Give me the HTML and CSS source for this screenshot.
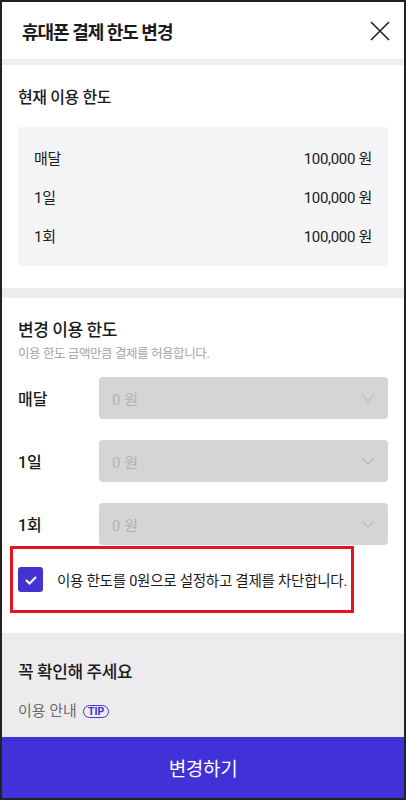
FILE: index.html
```html
<!DOCTYPE html>
<html lang="ko">
<head>
    <meta charset="UTF-8">
    <meta name="viewport" content="width=device-width, initial-scale=1.0">
    <title>휴대폰 결제 한도 변경</title>
    <link rel="stylesheet" href="styles.css">
</head>
<body>
    <div class="app">
        <div class="content">
            <!-- 상단 헤더 -->
            <header class="top-bar">
                <h1>휴대폰 결제 한도 변경</h1>
                <button class="close-btn" aria-label="닫기">
                    <svg width="20" height="20" viewBox="0 0 20 20">
                        <path d="M1 1 L19 19 M19 1 L1 19" stroke="#222" stroke-width="1.6" fill="none"/>
                    </svg>
                </button>
            </header>
            <div class="divider-thin"></div>

            <!-- 현재 이용 한도 -->
            <section class="section">
                <h2 class="section-title">현재 이용 한도</h2>
                <div class="limit-box">
                    <div class="limit-line"><span>매달</span><span>100,000 원</span></div>
                    <div class="limit-line"><span>1일</span><span>100,000 원</span></div>
                    <div class="limit-line"><span>1회</span><span>100,000 원</span></div>
                </div>
            </section>
            <div class="divider-thick"></div>

            <!-- 변경 이용 한도 -->
            <section class="section change">
                <h2 class="section-title">변경 이용 한도</h2>
                <p class="section-sub">이용 한도 금액만큼 결제를 허용합니다.</p>
                <div class="limit-form">
                    <div class="form-row">
                        <span class="form-label">매달</span>
                        <div class="select-box">
                            <span>0 원</span>
                            <svg width="14" height="8" viewBox="0 0 14 8"><path d="M1 1 L7 7 L13 1" stroke="#bdbdbd" stroke-width="1.3" fill="none"/></svg>
                        </div>
                    </div>
                    <div class="form-row">
                        <span class="form-label">1일</span>
                        <div class="select-box">
                            <span>0 원</span>
                            <svg width="14" height="8" viewBox="0 0 14 8"><path d="M1 1 L7 7 L13 1" stroke="#bdbdbd" stroke-width="1.3" fill="none"/></svg>
                        </div>
                    </div>
                    <div class="form-row">
                        <span class="form-label">1회</span>
                        <div class="select-box">
                            <span>0 원</span>
                            <svg width="14" height="8" viewBox="0 0 14 8"><path d="M1 1 L7 7 L13 1" stroke="#bdbdbd" stroke-width="1.3" fill="none"/></svg>
                        </div>
                    </div>
                </div>
                <label class="block-check">
                    <span class="checkbox">
                        <svg width="14" height="10" viewBox="0 0 14 10"><path d="M2 5 L5.5 8.5 L12 2" stroke="#fff" stroke-width="2" fill="none"/></svg>
                    </span>
                    <span>이용 한도를 0원으로 설정하고 결제를 차단합니다.</span>
                </label>
            </section>

            <!-- 꼭 확인해 주세요 -->
            <section class="notice">
                <h2 class="section-title">꼭 확인해 주세요</h2>
                <div class="notice-line">이용 안내 <span class="tip">TIP</span></div>
                <div class="notice-line">결제 유의 <span class="tip filled">TIP</span></div>
            </section>
        </div>

        <button class="submit-btn">변경하기</button>
    </div>
</body>
</html>
```

FILE: styles.css
```css
body {
    margin: 0;
    font-family: Roboto, "Noto Sans CJK KR", sans-serif;
    color: #1a1a1a;
    background-color: #fff;
}
.app {
    height: 800px;
    box-sizing: border-box;
    border: 2px solid #222;
    display: flex;
    flex-direction: column;
    overflow: hidden;
}
.content {
    flex: 1;
    overflow: hidden;
}
.top-bar {
    height: 57px;
    display: flex;
    align-items: center;
    justify-content: space-between;
    padding: 0 12px 0 20px;
}
.top-bar h1 {
    margin: 0;
    font-size: 18px;
    font-weight: 700;
    letter-spacing: -1px;
}
.close-btn {
    border: none;
    background: none;
    padding: 0;
    width: 24px;
    height: 24px;
    display: flex;
    align-items: center;
    justify-content: center;
}
.divider-thin {
    height: 6px;
    background-color: #eeeeee;
}
.divider-thick {
    height: 10px;
    background-color: #ececee;
}
.section {
    padding: 22px 16px;
}
.section-title {
    margin: 0;
    font-size: 16px;
    line-height: 22px;
    font-weight: 500;
    letter-spacing: -0.4px;
}
.limit-box {
    margin-top: 18px;
    background-color: #f4f4f6;
    border-radius: 3px;
    padding: 11px 16px;
}
.limit-line {
    display: flex;
    justify-content: space-between;
    align-items: center;
    height: 39px;
    font-size: 15px;
    letter-spacing: -0.3px;
}
.change {
    padding: 20px 16px 20px;
}
.change .section-title {
    font-size: 17px;
    line-height: 24px;
}
.section-sub {
    margin: 3px 0 0;
    font-size: 12.5px;
    line-height: 18px;
    color: #a3a3a3;
    letter-spacing: -0.4px;
}
.limit-form {
    margin-top: 14px;
    display: flex;
    flex-direction: column;
    gap: 21px;
}
.form-row {
    display: flex;
    align-items: center;
}
.form-label {
    width: 81px;
    font-size: 16px;
    font-weight: 500;
}
.select-box {
    flex: 1;
    height: 42px;
    background-color: #d5d5d5;
    border-radius: 4px;
    display: flex;
    align-items: center;
    justify-content: space-between;
    padding: 0 13px;
    font-size: 15px;
    color: #b3b3b3;
}
.block-check {
    margin: 1px 0 0 -8px;
    display: inline-flex;
    align-items: center;
    gap: 14px;
    border: 3px solid #e8141b;
    padding: 18px 4px 18px 5px;
    font-size: 14.5px;
    letter-spacing: -0.25px;
}
.checkbox {
    width: 25px;
    height: 25px;
    border-radius: 3px;
    background-color: #4433d0;
    display: flex;
    align-items: center;
    justify-content: center;
}
.notice {
    background-color: #ececee;
    padding: 27px 16px 30px;
}
.notice .section-title {
    font-size: 17px;
    line-height: 24px;
}
.notice-line {
    margin-top: 16px;
    font-size: 15px;
    line-height: 22px;
    color: #6b6b6b;
    display: flex;
    align-items: center;
    gap: 6px;
}
.tip {
    display: inline-block;
    border: 1.5px solid #4433d0;
    border-radius: 8px;
    padding: 0 4px;
    font-size: 10.5px;
    line-height: 11px;
    font-weight: 700;
    color: #4433d0;
}
.tip.filled {
    background-color: #4433d0;
    color: #fff;
}
.submit-btn {
    height: 61px;
    border: none;
    background-color: #4131d8;
    color: #fff;
    font-family: inherit;
    font-size: 19px;
    letter-spacing: -0.3px;
}
```
